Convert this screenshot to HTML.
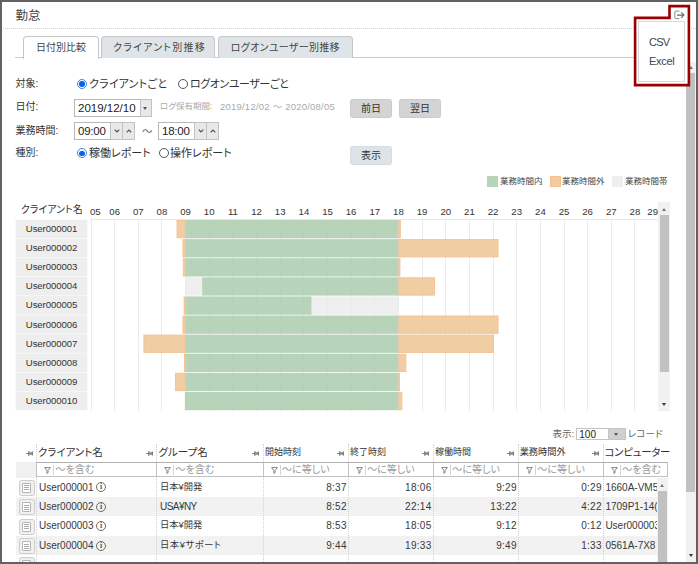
<!DOCTYPE html><html lang="ja"><head><meta charset="utf-8"><title>勤怠</title><style>
html,body{margin:0;padding:0;background:#fff;}
body{width:698px;height:564px;overflow:hidden;font-family:"Liberation Sans","Noto Sans CJK JP",sans-serif;color:#333;font-size:11px;}
#frame{position:absolute;left:0;top:0;width:698px;height:564px;box-sizing:border-box;border-style:solid;border-color:#626262;border-width:2px;overflow:hidden;}
#frame>*,#chart>*{position:absolute;}
#frame{margin:0}
.ab{position:absolute;white-space:nowrap;}
#inner{position:absolute;left:-2px;top:-2px;width:698px;height:564px;}
.jp{font-feature-settings:"palt" 1;}
.title{left:15.5px;top:7px;font-size:12.5px;line-height:18px;color:#444;}
.dot{height:0;border-top:1px dotted #cfcfcf;}
.tab{box-sizing:border-box;height:22px;top:36px;border:1px solid #c6c6c6;border-bottom:none;border-radius:4px 4px 0 0;background:#dfe4e8;text-align:center;font-size:10px;line-height:21px;color:#444;}
.tab.act{background:#fff;height:23px;}
.lab{font-size:10px;line-height:14px;color:#333;}
.radio{width:10px;height:10px;border:1px solid #555;border-radius:50%;box-sizing:border-box;background:#fff;}
.radio.on{border-color:#3d85ea;}
.radio.on::after{content:"";position:absolute;left:1.2px;top:1.2px;width:5.6px;height:5.6px;border-radius:50%;background:#0b63e3;}
.inp{box-sizing:border-box;border:1px solid #b8b8b8;background:#fff;font-size:11.5px;color:#222;padding-left:3px;}
.sbtn{box-sizing:border-box;border:1px solid #c2c2c2;background:#e8e8e8;}
.btn{box-sizing:border-box;border:1px dotted #c2c2c2;border-radius:3px;background:#d4d4d4;text-align:center;font-size:10px;color:#333;}
.btn.lt{background:#dde3e8;border-color:#d0d6da;}
.note{font-size:8.5px;color:#aaa;}
.lg{font-size:8.5px;color:#444;line-height:12px;}
.sw{height:11px;}
.g{background:#b7d4bb;}
.o{background:#f1cca3;box-shadow:inset 0 0 0 1px #f3c08f;}
.e{background:#efefef;}
.ch-title{font-size:10px;line-height:15px;color:#333;}
.hl{font-size:9.6px;line-height:14px;color:#333;}
.vg{width:1px;background:#ebedee;}
.vg2{width:1px;background:rgba(40,60,80,0.015);}
.hg{height:1px;background:#e8e8e8;}
.rl{text-align:center;font-size:9.6px;letter-spacing:-0.1px;color:#333;}
.sb{background:#f1f1f1;}
.th{background:#c1c1c1;}
.arr{width:0;height:0;border-left:2.8px solid transparent;border-right:2.8px solid transparent;}
.arr.up{border-bottom:3.3px solid #666;}
.arr.dn{border-top:3.3px solid #333;}
.thd{font-size:10.5px;line-height:15px;color:#333;}
.flt{box-sizing:border-box;border:1px solid #c2c2c2;border-top-color:#b0b0b0;background:#fff;font-size:10.5px;color:#999;line-height:14px;}
.cell{font-size:10px;line-height:19px;color:#383838;}
.num{text-align:right;}
.rowbg{left:15.7px;width:642px;height:19.4px;}
.vsep{width:0;border-left:1px dotted #cfcfcf;}
.ico{box-sizing:border-box;width:16px;height:16px;border:1px solid #cdcdcd;border-radius:2.5px;background:#f0f0f0;}
.ico b{position:absolute;box-sizing:border-box;left:2.5px;top:2px;width:9px;height:10px;border:1px solid #b4b4b4;border-radius:1px;background:#fff;}
.fl-t{font-size:10px;line-height:15px;color:#9a9a9a;}
.info{box-sizing:border-box;width:10px;height:10px;border:1px solid #6a6a6a;border-radius:50%;font-size:8px;font-weight:bold;line-height:8px;text-align:center;color:#555;font-family:"Liberation Serif",serif;}
.ico i{display:block;position:absolute;left:4.5px;width:5px;height:1px;background:#aaa;}
.ico i:nth-of-type(1){top:4.5px}.ico i:nth-of-type(2){top:6.5px}.ico i:nth-of-type(3){top:8.5px}
.red{box-sizing:border-box;border:2px solid #a3131c;background:transparent;}
.pop{box-sizing:border-box;border:1px solid #d9d9d9;background:#fff;}
.pi{font-size:11px;line-height:14px;color:#444;letter-spacing:-0.3px;}
.cj{font-size:9.3px;}

</style></head><body><div id="frame">
<div id="inner">
<div class="ab title jp">勤怠</div>
<div class="ab dot" style="left:3px;top:28px;width:693px"></div>
<!-- tabs -->
<div class="ab" style="left:15px;top:57px;width:672px;height:1px;background:#cdcdcd"></div>
<div class="ab tab act jp" style="left:23px;width:76px">日付別比較</div>
<div class="ab tab jp" style="left:101px;width:114px;letter-spacing:1.2px;text-indent:3px">クライアント別推移</div>
<div class="ab tab jp" style="left:217.5px;width:135.5px;letter-spacing:0.3px">ログオンユーザー別推移</div>
<!-- form -->
<div class="ab lab jp" style="left:15.5px;top:76.5px">対象:</div>
<div class="ab radio on" style="left:77.3px;top:78.8px"></div>
<div class="ab lab jp" style="left:89px;top:76.5px;font-size:11px;letter-spacing:0.2px">クライアントごと</div>
<div class="ab radio" style="left:178.1px;top:78.8px"></div>
<div class="ab lab jp" style="left:190px;top:76.5px;font-size:11px;letter-spacing:-0.45px">ログオンユーザーごと</div>

<div class="ab lab jp" style="left:15.5px;top:100px">日付:</div>
<div class="ab inp" style="left:74px;top:99px;width:67px;height:18px;line-height:16px">2019/12/10</div>
<div class="ab sbtn" style="left:140px;top:99px;width:12px;height:18px"></div>
<div class="ab arr dn" style="left:143.2px;top:106.8px;border-left-width:2.8px;border-right-width:2.8px;border-top:3.2px solid #555"></div>
<div class="ab note jp" style="left:160px;top:99px">ログ保有期間:</div>
<div class="ab note" style="left:220px;top:99px;font-size:9.5px;letter-spacing:0.22px">2019/12/02 ～ 2020/08/05</div>
<div class="ab btn jp" style="left:350px;top:99px;width:42px;height:19px;line-height:17px">前日</div>
<div class="ab btn jp" style="left:399px;top:99px;width:42px;height:19px;line-height:17px">翌日</div>

<div class="ab lab jp" style="left:15.5px;top:123.5px">業務時間:</div>
<div class="ab inp" style="left:74px;top:122px;width:37px;height:18px;line-height:16px;letter-spacing:-0.25px">09:00</div>
<div class="ab sbtn" style="left:110px;top:122px;width:13px;height:18px"></div>
<div class="ab sbtn" style="left:122px;top:122px;width:13px;height:18px"></div>
<svg class="ab" style="left:113.5px;top:129px" width="6" height="4" viewBox="0 0 6 4"><path d="M0.7 0.7L3 3L5.3 0.7" stroke="#505050" stroke-width="1.15" fill="none"/></svg>
<svg class="ab" style="left:125.5px;top:129px" width="6" height="4" viewBox="0 0 6 4"><path d="M0.7 3.3L3 1L5.3 3.3" stroke="#505050" stroke-width="1.15" fill="none"/></svg>
<div class="ab lab" style="left:142px;top:123.5px;font-size:10.5px;color:#666">～</div>
<div class="ab inp" style="left:158px;top:122px;width:37px;height:18px;line-height:16px;letter-spacing:-0.25px">18:00</div>
<div class="ab sbtn" style="left:194px;top:122px;width:13px;height:18px"></div>
<div class="ab sbtn" style="left:206px;top:122px;width:13px;height:18px"></div>
<svg class="ab" style="left:197.5px;top:129px" width="6" height="4" viewBox="0 0 6 4"><path d="M0.7 0.7L3 3L5.3 0.7" stroke="#505050" stroke-width="1.15" fill="none"/></svg>
<svg class="ab" style="left:209.5px;top:129px" width="6" height="4" viewBox="0 0 6 4"><path d="M0.7 3.3L3 1L5.3 3.3" stroke="#505050" stroke-width="1.15" fill="none"/></svg>

<div class="ab lab jp" style="left:15.5px;top:146px">種別:</div>
<div class="ab radio on" style="left:77.3px;top:148.4px"></div>
<div class="ab lab jp" style="left:89px;top:146px;font-size:11px">稼働レポート</div>
<div class="ab radio" style="left:158.8px;top:148.4px"></div>
<div class="ab lab jp" style="left:170px;top:146px;font-size:11px">操作レポート</div>
<div class="ab btn lt jp" style="left:350px;top:146px;width:42px;height:19px;line-height:17px">表示</div>

<!-- legend -->
<div class="ab sw g" style="left:487px;top:176px;width:11px"></div>
<div class="ab lg jp" style="left:500px;top:175px">業務時間内</div>
<div class="ab sw o" style="left:550px;top:176px;width:11px"></div>
<div class="ab lg jp" style="left:562px;top:175px">業務時間外</div>
<div class="ab sw e" style="left:612px;top:176px;width:11px"></div>
<div class="ab lg jp" style="left:625px;top:175px">業務時間帯</div>

<div id="chart">
<div class="ab ch-title jp" style="left:20.8px;top:202px;">クライアント名</div>
<div class="ab hl" style="left:90px;top:205px;width:14px;text-align:left">05</div>
<div class="ab hl" style="left:104.7px;top:205px;width:20px;text-align:center">06</div>
<div class="ab hl" style="left:128.3px;top:205px;width:20px;text-align:center">07</div>
<div class="ab hl" style="left:151.9px;top:205px;width:20px;text-align:center">08</div>
<div class="ab hl" style="left:175.6px;top:205px;width:20px;text-align:center">09</div>
<div class="ab hl" style="left:199.2px;top:205px;width:20px;text-align:center">10</div>
<div class="ab hl" style="left:222.9px;top:205px;width:20px;text-align:center">11</div>
<div class="ab hl" style="left:246.5px;top:205px;width:20px;text-align:center">12</div>
<div class="ab hl" style="left:270.2px;top:205px;width:20px;text-align:center">13</div>
<div class="ab hl" style="left:293.9px;top:205px;width:20px;text-align:center">14</div>
<div class="ab hl" style="left:317.5px;top:205px;width:20px;text-align:center">15</div>
<div class="ab hl" style="left:341.1px;top:205px;width:20px;text-align:center">16</div>
<div class="ab hl" style="left:364.8px;top:205px;width:20px;text-align:center">17</div>
<div class="ab hl" style="left:388.4px;top:205px;width:20px;text-align:center">18</div>
<div class="ab hl" style="left:412.1px;top:205px;width:20px;text-align:center">19</div>
<div class="ab hl" style="left:435.8px;top:205px;width:20px;text-align:center">20</div>
<div class="ab hl" style="left:459.4px;top:205px;width:20px;text-align:center">21</div>
<div class="ab hl" style="left:483.0px;top:205px;width:20px;text-align:center">22</div>
<div class="ab hl" style="left:506.7px;top:205px;width:20px;text-align:center">23</div>
<div class="ab hl" style="left:530.4px;top:205px;width:20px;text-align:center">24</div>
<div class="ab hl" style="left:554.0px;top:205px;width:20px;text-align:center">25</div>
<div class="ab hl" style="left:577.6px;top:205px;width:20px;text-align:center">26</div>
<div class="ab hl" style="left:601.3px;top:205px;width:20px;text-align:center">27</div>
<div class="ab hl" style="left:624.9px;top:205px;width:20px;text-align:center">28</div>
<div class="ab hl" style="left:640px;top:205px;width:18px;text-align:right">29</div>
<div class="ab vg" style="left:90.5px;top:219px;height:192px"></div>
<div class="ab vg" style="left:114.2px;top:219px;height:192px"></div>
<div class="ab vg" style="left:137.8px;top:219px;height:192px"></div>
<div class="ab vg" style="left:161.4px;top:219px;height:192px"></div>
<div class="ab vg" style="left:185.1px;top:219px;height:192px"></div>
<div class="ab vg" style="left:208.8px;top:219px;height:192px"></div>
<div class="ab vg" style="left:232.4px;top:219px;height:192px"></div>
<div class="ab vg" style="left:256.0px;top:219px;height:192px"></div>
<div class="ab vg" style="left:279.7px;top:219px;height:192px"></div>
<div class="ab vg" style="left:303.4px;top:219px;height:192px"></div>
<div class="ab vg" style="left:327.0px;top:219px;height:192px"></div>
<div class="ab vg" style="left:350.6px;top:219px;height:192px"></div>
<div class="ab vg" style="left:374.3px;top:219px;height:192px"></div>
<div class="ab vg" style="left:397.9px;top:219px;height:192px"></div>
<div class="ab vg" style="left:421.6px;top:219px;height:192px"></div>
<div class="ab vg" style="left:445.2px;top:219px;height:192px"></div>
<div class="ab vg" style="left:468.9px;top:219px;height:192px"></div>
<div class="ab vg" style="left:492.5px;top:219px;height:192px"></div>
<div class="ab vg" style="left:516.2px;top:219px;height:192px"></div>
<div class="ab vg" style="left:539.9px;top:219px;height:192px"></div>
<div class="ab vg" style="left:563.5px;top:219px;height:192px"></div>
<div class="ab vg" style="left:587.1px;top:219px;height:192px"></div>
<div class="ab vg" style="left:610.8px;top:219px;height:192px"></div>
<div class="ab vg" style="left:634.4px;top:219px;height:192px"></div>
<div class="ab vg" style="left:658.1px;top:219px;height:192px"></div>
<div class="ab hg" style="left:90px;top:219px;width:569px"></div>
<svg class="ab" style="left:0;top:0" width="698" height="420" viewBox="0 0 698 420">
<rect x="15.6" y="219.70" width="71.8" height="18.60" fill="#eeeeee"/>
<rect x="177.03" y="220.50" width="8.07" height="17.30" fill="#f0cda3" stroke="#f6c394" stroke-width="1"/>
<rect x="185.60" y="220.00" width="212.85" height="18.30" fill="#b7d4bb"/>
<rect x="398.95" y="220.50" width="1.37" height="17.30" fill="#f0cda3" stroke="#f6c394" stroke-width="1"/>
<rect x="15.6" y="238.80" width="71.8" height="18.60" fill="#eeeeee"/>
<rect x="182.95" y="239.60" width="2.15" height="17.30" fill="#f0cda3" stroke="#f6c394" stroke-width="1"/>
<rect x="185.60" y="239.10" width="212.85" height="18.30" fill="#b7d4bb"/>
<rect x="398.95" y="239.60" width="99.12" height="17.30" fill="#f0cda3" stroke="#f6c394" stroke-width="1"/>
<rect x="15.6" y="257.90" width="71.8" height="18.60" fill="#eeeeee"/>
<rect x="183.34" y="258.70" width="1.76" height="17.30" fill="#f0cda3" stroke="#f6c394" stroke-width="1"/>
<rect x="185.60" y="258.20" width="212.85" height="18.30" fill="#b7d4bb"/>
<rect x="398.95" y="258.70" width="0.97" height="17.30" fill="#f0cda3" stroke="#f6c394" stroke-width="1"/>
<rect x="15.6" y="277.00" width="71.8" height="18.60" fill="#eeeeee"/>
<rect x="185.60" y="277.30" width="16.55" height="18.30" fill="#efefef"/>
<rect x="202.15" y="277.30" width="196.30" height="18.30" fill="#b7d4bb"/>
<rect x="398.95" y="277.80" width="35.66" height="17.30" fill="#f0cda3" stroke="#f6c394" stroke-width="1"/>
<rect x="15.6" y="296.10" width="71.8" height="18.60" fill="#eeeeee"/>
<rect x="184.13" y="296.90" width="0.97" height="17.30" fill="#f0cda3" stroke="#f6c394" stroke-width="1"/>
<rect x="185.60" y="296.40" width="126.13" height="18.30" fill="#b7d4bb"/>
<rect x="311.73" y="296.40" width="86.72" height="18.30" fill="#efefef"/>
<rect x="15.6" y="315.20" width="71.8" height="18.60" fill="#eeeeee"/>
<rect x="182.95" y="316.00" width="2.15" height="17.30" fill="#f0cda3" stroke="#f6c394" stroke-width="1"/>
<rect x="185.60" y="315.50" width="212.85" height="18.30" fill="#b7d4bb"/>
<rect x="398.95" y="316.00" width="99.12" height="17.30" fill="#f0cda3" stroke="#f6c394" stroke-width="1"/>
<rect x="15.6" y="334.30" width="71.8" height="18.60" fill="#eeeeee"/>
<rect x="143.92" y="335.10" width="41.18" height="17.30" fill="#f0cda3" stroke="#f6c394" stroke-width="1"/>
<rect x="185.60" y="334.60" width="212.85" height="18.30" fill="#b7d4bb"/>
<rect x="398.95" y="335.10" width="94.39" height="17.30" fill="#f0cda3" stroke="#f6c394" stroke-width="1"/>
<rect x="15.6" y="353.40" width="71.8" height="18.60" fill="#eeeeee"/>
<rect x="184.52" y="354.20" width="0.58" height="17.30" fill="#f0cda3" stroke="#f6c394" stroke-width="1"/>
<rect x="185.60" y="353.70" width="212.85" height="18.30" fill="#b7d4bb"/>
<rect x="398.95" y="354.20" width="6.88" height="17.30" fill="#f0cda3" stroke="#f6c394" stroke-width="1"/>
<rect x="15.6" y="372.50" width="71.8" height="18.60" fill="#eeeeee"/>
<rect x="175.46" y="373.30" width="9.64" height="17.30" fill="#f0cda3" stroke="#f6c394" stroke-width="1"/>
<rect x="185.60" y="372.80" width="212.85" height="18.30" fill="#b7d4bb"/>
<rect x="398.95" y="373.30" width="0.58" height="17.30" fill="#f0cda3" stroke="#f6c394" stroke-width="1"/>
<rect x="15.6" y="391.60" width="71.8" height="18.60" fill="#eeeeee"/>
<rect x="185.31" y="392.40" width="0.40" height="17.30" fill="#f0cda3" stroke="#f6c394" stroke-width="1"/>
<rect x="185.60" y="391.90" width="212.85" height="18.30" fill="#b7d4bb"/>
<rect x="398.95" y="392.40" width="2.94" height="17.30" fill="#f0cda3" stroke="#f6c394" stroke-width="1"/>
</svg>
<div class="ab rl" style="left:15.6px;top:220.0px;width:71.8px;height:18.3px;line-height:18.3px">User000001</div>
<div class="ab rl" style="left:15.6px;top:239.1px;width:71.8px;height:18.3px;line-height:18.3px">User000002</div>
<div class="ab rl" style="left:15.6px;top:258.2px;width:71.8px;height:18.3px;line-height:18.3px">User000003</div>
<div class="ab rl" style="left:15.6px;top:277.3px;width:71.8px;height:18.3px;line-height:18.3px">User000004</div>
<div class="ab rl" style="left:15.6px;top:296.4px;width:71.8px;height:18.3px;line-height:18.3px">User000005</div>
<div class="ab rl" style="left:15.6px;top:315.5px;width:71.8px;height:18.3px;line-height:18.3px">User000006</div>
<div class="ab rl" style="left:15.6px;top:334.6px;width:71.8px;height:18.3px;line-height:18.3px">User000007</div>
<div class="ab rl" style="left:15.6px;top:353.7px;width:71.8px;height:18.3px;line-height:18.3px">User000008</div>
<div class="ab rl" style="left:15.6px;top:372.8px;width:71.8px;height:18.3px;line-height:18.3px">User000009</div>
<div class="ab rl" style="left:15.6px;top:391.9px;width:71.8px;height:18.3px;line-height:18.3px">User000010</div>
<div class="ab vg2" style="left:90.5px;top:219px;height:192px"></div>
<div class="ab vg2" style="left:114.2px;top:219px;height:192px"></div>
<div class="ab vg2" style="left:137.8px;top:219px;height:192px"></div>
<div class="ab vg2" style="left:161.4px;top:219px;height:192px"></div>
<div class="ab vg2" style="left:185.1px;top:219px;height:192px"></div>
<div class="ab vg2" style="left:208.8px;top:219px;height:192px"></div>
<div class="ab vg2" style="left:232.4px;top:219px;height:192px"></div>
<div class="ab vg2" style="left:256.0px;top:219px;height:192px"></div>
<div class="ab vg2" style="left:279.7px;top:219px;height:192px"></div>
<div class="ab vg2" style="left:303.4px;top:219px;height:192px"></div>
<div class="ab vg2" style="left:327.0px;top:219px;height:192px"></div>
<div class="ab vg2" style="left:350.6px;top:219px;height:192px"></div>
<div class="ab vg2" style="left:374.3px;top:219px;height:192px"></div>
<div class="ab vg2" style="left:397.9px;top:219px;height:192px"></div>
<div class="ab vg2" style="left:421.6px;top:219px;height:192px"></div>
<div class="ab vg2" style="left:445.2px;top:219px;height:192px"></div>
<div class="ab vg2" style="left:468.9px;top:219px;height:192px"></div>
<div class="ab vg2" style="left:492.5px;top:219px;height:192px"></div>
<div class="ab vg2" style="left:516.2px;top:219px;height:192px"></div>
<div class="ab vg2" style="left:539.9px;top:219px;height:192px"></div>
<div class="ab vg2" style="left:563.5px;top:219px;height:192px"></div>
<div class="ab vg2" style="left:587.1px;top:219px;height:192px"></div>
<div class="ab vg2" style="left:610.8px;top:219px;height:192px"></div>
<div class="ab vg2" style="left:634.4px;top:219px;height:192px"></div>
<div class="ab vg2" style="left:658.1px;top:219px;height:192px"></div>
</div>
<!-- chart scrollbar -->
<div class="ab sb" style="left:658.4px;top:202px;width:11.8px;height:209px"></div>
<div class="ab th" style="left:659.6px;top:215px;width:9.4px;height:156.5px"></div>
<div class="ab arr up" style="left:661.8px;top:207.5px;border-bottom-color:#777"></div>
<div class="ab arr dn" style="left:661.8px;top:403px"></div>

<!-- record -->
<div class="ab lab jp" style="left:552.5px;top:427px;font-size:9.5px;color:#666">表示:</div>
<div class="ab inp" style="left:576.3px;top:428px;width:49.2px;height:12.4px;line-height:11px;font-size:10px;padding-left:2px;border-color:#c4c4c4">100</div>
<div class="ab sbtn" style="left:608px;top:428px;width:17.5px;height:12.4px;background:#d0d0d0;border-color:#c4c4c4"></div>
<div class="ab arr dn" style="left:614px;top:432.8px;border-left-width:2.8px;border-right-width:2.8px;border-top:3.2px solid #555"></div>
<div class="ab lab jp" style="left:627.8px;top:427px;font-size:9.5px;letter-spacing:0.15px;color:#666">レコード</div>

<!-- table -->
<div class="ab rowbg" style="top:462px;height:15.5px;background:#f0f0f0;width:22px"></div>
<div class="ab rowbg" style="top:497px;background:#f2f2f2"></div>
<div class="ab rowbg" style="top:535.8px;background:#f2f2f2"></div>

<div class="ab thd jp" style="left:37.8px;top:445px">クライアント名</div>
<div class="ab thd jp" style="left:158.5px;top:445px">グループ名</div>
<div class="ab thd jp" style="left:265px;top:445px;font-size:9px">開始時刻</div>
<div class="ab thd jp" style="left:350px;top:445px;font-size:9px">終了時刻</div>
<div class="ab thd jp" style="left:435px;top:445px;font-size:9px">稼働時間</div>
<div class="ab thd jp" style="left:519.7px;top:445px;font-size:9.2px">業務時間外</div>
<div class="ab thd jp" style="left:604.5px;top:445px;letter-spacing:-0.3px">コンピューター</div>

<svg class="ab" style="left:26.2px;top:449.5px" width="7" height="7" viewBox="0 0 7 7"><path d="M0 3.5H2.6" stroke="#777" stroke-width="0.9" fill="none"/><path d="M2.8 1.2V5.8M6.3 1.6V5.4" stroke="#666" stroke-width="1.1" fill="none"/><rect x="3" y="2.3" width="3" height="2.4" fill="#888"/></svg>
<svg class="ab" style="left:146.2px;top:449.5px" width="7" height="7" viewBox="0 0 7 7"><path d="M0 3.5H2.6" stroke="#777" stroke-width="0.9" fill="none"/><path d="M2.8 1.2V5.8M6.3 1.6V5.4" stroke="#666" stroke-width="1.1" fill="none"/><rect x="3" y="2.3" width="3" height="2.4" fill="#888"/></svg>
<svg class="ab" style="left:252.4px;top:449.5px" width="7" height="7" viewBox="0 0 7 7"><path d="M0 3.5H2.6" stroke="#777" stroke-width="0.9" fill="none"/><path d="M2.8 1.2V5.8M6.3 1.6V5.4" stroke="#666" stroke-width="1.1" fill="none"/><rect x="3" y="2.3" width="3" height="2.4" fill="#888"/></svg>
<svg class="ab" style="left:337.2px;top:449.5px" width="7" height="7" viewBox="0 0 7 7"><path d="M0 3.5H2.6" stroke="#777" stroke-width="0.9" fill="none"/><path d="M2.8 1.2V5.8M6.3 1.6V5.4" stroke="#666" stroke-width="1.1" fill="none"/><rect x="3" y="2.3" width="3" height="2.4" fill="#888"/></svg>
<svg class="ab" style="left:422.3px;top:449.5px" width="7" height="7" viewBox="0 0 7 7"><path d="M0 3.5H2.6" stroke="#777" stroke-width="0.9" fill="none"/><path d="M2.8 1.2V5.8M6.3 1.6V5.4" stroke="#666" stroke-width="1.1" fill="none"/><rect x="3" y="2.3" width="3" height="2.4" fill="#888"/></svg>
<svg class="ab" style="left:507.4px;top:449.5px" width="7" height="7" viewBox="0 0 7 7"><path d="M0 3.5H2.6" stroke="#777" stroke-width="0.9" fill="none"/><path d="M2.8 1.2V5.8M6.3 1.6V5.4" stroke="#666" stroke-width="1.1" fill="none"/><rect x="3" y="2.3" width="3" height="2.4" fill="#888"/></svg>
<svg class="ab" style="left:592.3px;top:449.5px" width="7" height="7" viewBox="0 0 7 7"><path d="M0 3.5H2.6" stroke="#777" stroke-width="0.9" fill="none"/><path d="M2.8 1.2V5.8M6.3 1.6V5.4" stroke="#666" stroke-width="1.1" fill="none"/><rect x="3" y="2.3" width="3" height="2.4" fill="#888"/></svg>
<div class="ab vsep" style="left:36.1px;top:444px;height:120px"></div>
<div class="ab vsep" style="left:156.0px;top:444px;height:120px"></div>
<div class="ab vsep" style="left:262.6px;top:444px;height:120px"></div>
<div class="ab vsep" style="left:347.7px;top:444px;height:120px"></div>
<div class="ab vsep" style="left:432.8px;top:444px;height:120px"></div>
<div class="ab vsep" style="left:517.8px;top:444px;height:120px"></div>
<div class="ab vsep" style="left:602.7px;top:444px;height:120px"></div>
<div class="ab flt" style="left:36.1px;top:462px;width:120.9px;height:15.4px"></div>
<svg class="ab" style="left:44.3px;top:466.6px" width="7" height="7" viewBox="0 0 7 7"><path d="M0.6 0.6H6.4L4.1 3.4V5.6L2.9 6.4V3.4Z" stroke="#777" stroke-width="0.9" fill="none" stroke-linejoin="round"/></svg>
<div class="ab" style="left:53.0px;top:465px;width:1px;height:10px;background:#d4d4d4"></div>
<div class="ab fl-t jp" style="left:55.6px;top:462px">～を含む</div>
<div class="ab flt" style="left:156.0px;top:462px;width:107.6px;height:15.4px"></div>
<svg class="ab" style="left:164.2px;top:466.6px" width="7" height="7" viewBox="0 0 7 7"><path d="M0.6 0.6H6.4L4.1 3.4V5.6L2.9 6.4V3.4Z" stroke="#777" stroke-width="0.9" fill="none" stroke-linejoin="round"/></svg>
<div class="ab" style="left:172.9px;top:465px;width:1px;height:10px;background:#d4d4d4"></div>
<div class="ab fl-t jp" style="left:175.5px;top:462px">～を含む</div>
<div class="ab flt" style="left:262.6px;top:462px;width:86.1px;height:15.4px"></div>
<svg class="ab" style="left:270.8px;top:466.6px" width="7" height="7" viewBox="0 0 7 7"><path d="M0.6 0.6H6.4L4.1 3.4V5.6L2.9 6.4V3.4Z" stroke="#777" stroke-width="0.9" fill="none" stroke-linejoin="round"/></svg>
<div class="ab" style="left:279.5px;top:465px;width:1px;height:10px;background:#d4d4d4"></div>
<div class="ab fl-t jp" style="left:282.1px;top:462px">～に等しい</div>
<div class="ab flt" style="left:347.7px;top:462px;width:86.1px;height:15.4px"></div>
<svg class="ab" style="left:355.9px;top:466.6px" width="7" height="7" viewBox="0 0 7 7"><path d="M0.6 0.6H6.4L4.1 3.4V5.6L2.9 6.4V3.4Z" stroke="#777" stroke-width="0.9" fill="none" stroke-linejoin="round"/></svg>
<div class="ab" style="left:364.6px;top:465px;width:1px;height:10px;background:#d4d4d4"></div>
<div class="ab fl-t jp" style="left:367.2px;top:462px">～に等しい</div>
<div class="ab flt" style="left:432.8px;top:462px;width:86.0px;height:15.4px"></div>
<svg class="ab" style="left:441.0px;top:466.6px" width="7" height="7" viewBox="0 0 7 7"><path d="M0.6 0.6H6.4L4.1 3.4V5.6L2.9 6.4V3.4Z" stroke="#777" stroke-width="0.9" fill="none" stroke-linejoin="round"/></svg>
<div class="ab" style="left:449.7px;top:465px;width:1px;height:10px;background:#d4d4d4"></div>
<div class="ab fl-t jp" style="left:452.3px;top:462px">～に等しい</div>
<div class="ab flt" style="left:517.8px;top:462px;width:85.9px;height:15.4px"></div>
<svg class="ab" style="left:526.0px;top:466.6px" width="7" height="7" viewBox="0 0 7 7"><path d="M0.6 0.6H6.4L4.1 3.4V5.6L2.9 6.4V3.4Z" stroke="#777" stroke-width="0.9" fill="none" stroke-linejoin="round"/></svg>
<div class="ab" style="left:534.7px;top:465px;width:1px;height:10px;background:#d4d4d4"></div>
<div class="ab fl-t jp" style="left:537.3px;top:462px">～に等しい</div>
<div class="ab flt" style="left:602.7px;top:462px;width:65.5px;height:15.4px"></div>
<svg class="ab" style="left:610.9px;top:466.6px" width="7" height="7" viewBox="0 0 7 7"><path d="M0.6 0.6H6.4L4.1 3.4V5.6L2.9 6.4V3.4Z" stroke="#777" stroke-width="0.9" fill="none" stroke-linejoin="round"/></svg>
<div class="ab" style="left:619.6px;top:465px;width:1px;height:10px;background:#d4d4d4"></div>
<div class="ab fl-t jp" style="left:622.2px;top:462px">～を含む</div>
<div class="ab ico" style="left:18.8px;top:479.7px"><b></b><i></i><i></i><i></i></div>
<div class="ab cell" style="left:39px;top:477.5px">User000001</div>
<div class="ab info" style="left:96.2px;top:482.3px">i</div>
<div class="ab cell cj jp" style="left:160px;top:477.5px">日本¥開発</div>
<div class="ab cell num" style="left:286.8px;width:60px;top:477.5px;letter-spacing:0.3px">8:37</div>
<div class="ab cell num" style="left:371.6px;width:60px;top:477.5px;letter-spacing:0.3px">18:06</div>
<div class="ab cell num" style="left:456.8px;width:60px;top:477.5px;letter-spacing:0.3px">9:29</div>
<div class="ab cell num" style="left:541.8px;width:60px;top:477.5px;letter-spacing:0.3px">0:29</div>
<div class="ab cell" style="left:605.4px;top:477.5px;width:51.5px;overflow:hidden">1660A-VM5</div>
<div class="ab ico" style="left:18.8px;top:499.2px"><b></b><i></i><i></i><i></i></div>
<div class="ab cell" style="left:39px;top:497px">User000002</div>
<div class="ab info" style="left:96.2px;top:501.8px">i</div>
<div class="ab cell cj jp" style="left:160px;top:497px;font-size:10px;letter-spacing:-0.55px">USA¥NY</div>
<div class="ab cell num" style="left:286.8px;width:60px;top:497px;letter-spacing:0.3px">8:52</div>
<div class="ab cell num" style="left:371.6px;width:60px;top:497px;letter-spacing:0.3px">22:14</div>
<div class="ab cell num" style="left:456.8px;width:60px;top:497px;letter-spacing:0.3px">13:22</div>
<div class="ab cell num" style="left:541.8px;width:60px;top:497px;letter-spacing:0.3px">4:22</div>
<div class="ab cell" style="left:605.4px;top:497px;width:51.5px;overflow:hidden">1709P1-14(</div>
<div class="ab ico" style="left:18.8px;top:518.5px"><b></b><i></i><i></i><i></i></div>
<div class="ab cell" style="left:39px;top:516.3px">User000003</div>
<div class="ab info" style="left:96.2px;top:521.0999999999999px">i</div>
<div class="ab cell cj jp" style="left:160px;top:516.3px">日本¥開発</div>
<div class="ab cell num" style="left:286.8px;width:60px;top:516.3px;letter-spacing:0.3px">8:53</div>
<div class="ab cell num" style="left:371.6px;width:60px;top:516.3px;letter-spacing:0.3px">18:05</div>
<div class="ab cell num" style="left:456.8px;width:60px;top:516.3px;letter-spacing:0.3px">9:12</div>
<div class="ab cell num" style="left:541.8px;width:60px;top:516.3px;letter-spacing:0.3px">0:12</div>
<div class="ab cell" style="left:605.4px;top:516.3px;width:51.5px;overflow:hidden">User000003</div>
<div class="ab ico" style="left:18.8px;top:538.0px"><b></b><i></i><i></i><i></i></div>
<div class="ab cell" style="left:39px;top:535.8px">User000004</div>
<div class="ab info" style="left:96.2px;top:540.5999999999999px">i</div>
<div class="ab cell cj jp" style="left:160px;top:535.8px;letter-spacing:0.55px">日本¥サポート</div>
<div class="ab cell num" style="left:286.8px;width:60px;top:535.8px;letter-spacing:0.3px">9:44</div>
<div class="ab cell num" style="left:371.6px;width:60px;top:535.8px;letter-spacing:0.3px">19:33</div>
<div class="ab cell num" style="left:456.8px;width:60px;top:535.8px;letter-spacing:0.3px">9:49</div>
<div class="ab cell num" style="left:541.8px;width:60px;top:535.8px;letter-spacing:0.3px">1:33</div>
<div class="ab cell" style="left:605.4px;top:535.8px;width:51.5px;overflow:hidden">0561A-7X8</div>
<div class="ab ico" style="left:18.8px;top:557.4000000000001px"><b></b><i></i><i></i><i></i></div>
<div class="ab sb" style="left:657.3px;top:478px;width:10.4px;height:90px"></div>
<div class="ab th" style="left:658.4px;top:490.5px;width:8.2px;height:80px"></div>
<div class="ab arr up" style="left:660px;top:483.5px;border-bottom-color:#777"></div>
<div class="ab sb" style="left:686px;top:62px;width:10px;height:500px;background:#f0f0f0"></div>
<div class="ab th" style="left:686.2px;top:73px;width:8.6px;height:418.5px;background:#c1c1c1"></div>
<div class="ab arr up" style="left:688.5px;top:66px;border-bottom-color:#777"></div>
<div class="ab arr dn" style="left:688.8px;top:554px"></div>
<div class="ab" style="left:635px;top:18px;width:54px;height:67px;background:#fff"></div>
<div class="ab pop" style="left:638px;top:21px;width:47px;height:61px"></div>
<svg class="ab" style="left:630px;top:0px" width="66" height="92" viewBox="630 0 66 92"><path d="M669.5 17.9V6.1H688.9V85.1H635.1V17.9H669.5Z" stroke="#9a0000" stroke-width="2.6" fill="none" stroke-linejoin="miter"/><path d="M679.3 11.1H675.6Q674.8 11.1 674.8 11.9V17.8Q674.8 18.6 675.6 18.6H679.3" stroke="#888" stroke-width="1" fill="none"/><path d="M677 15.1H683.4M681.2 12.3L683.9 15.1L681.2 17.9" stroke="#666" stroke-width="1.1" fill="none"/></svg>
<div class="ab pi" style="left:649px;top:34.5px;letter-spacing:-0.8px">CSV</div>
<div class="ab pi" style="left:649px;top:54px">Excel</div>
</div>
</div></body></html>
